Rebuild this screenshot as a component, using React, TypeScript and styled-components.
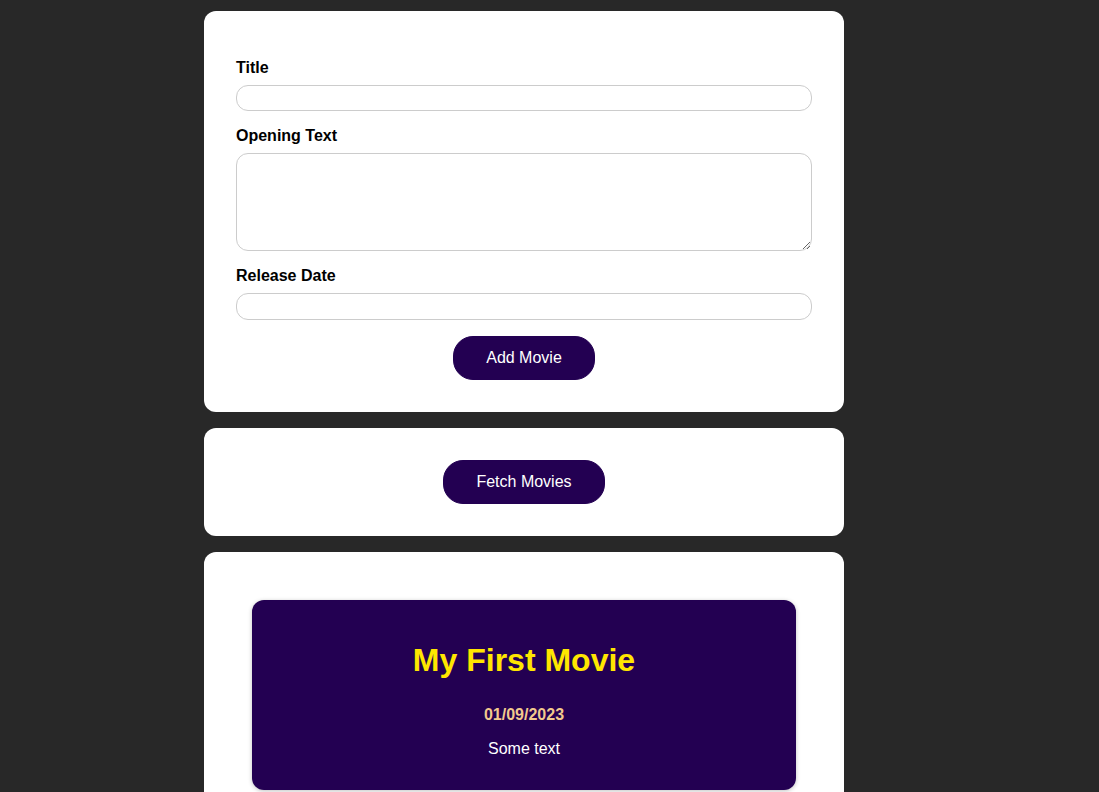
import React from "react";
import styled, { createGlobalStyle } from "styled-components";

const GlobalStyle = createGlobalStyle`
  * { box-sizing: border-box; }
  html, body {
    margin: 0;
    padding: 0;
    background: #282828;
    font-family: "Liberation Sans", Arial, sans-serif;
    font-size: 16px;
  }
`;

const Page = styled.main`
  width: 1048px;
  display: flex;
  flex-direction: column;
  align-items: center;
  gap: 16px;
  padding-top: 11px;
`;

const Section = styled.section`
  width: 640px;
  max-width: 90%;
  background: #ffffff;
  border-radius: 12px;
  padding: 32px;
  text-align: center;
`;

const Form = styled.form`
  padding-top: 16px;
  text-align: left;
  display: flex;
  flex-direction: column;
`;

const Control = styled.div`
  margin-bottom: 16px;
`;

const Label = styled.label`
  display: block;
  font-weight: bold;
  margin-bottom: 8px;
  color: #000;
`;

const Input = styled.input`
  display: block;
  width: 100%;
  font: inherit;
  padding: 3.2px;
  border-radius: 12px;
  border: 1px solid #ccc;
  background: #fff;
  outline: none;
`;

const TextArea = styled.textarea`
  display: block;
  width: 100%;
  font: inherit;
  padding: 3.2px;
  border-radius: 12px;
  border: 1px solid #ccc;
  height: 98px;
  background: #fff;
  outline: none;
`;

const Button = styled.button`
  font: inherit;
  cursor: pointer;
  background: #230052;
  border: 1px solid #230052;
  color: #ffffff;
  padding: 12px 32px;
  border-radius: 20px;
  align-self: center;
`;

const MovieList = styled.ul`
  list-style: none;
  margin: 0;
  padding: 0;
`;

const Movie = styled.li`
  margin: 16px;
  padding: 16px;
  text-align: center;
  background: #230052;
  color: #ffffff;
  border-radius: 12px;
  box-shadow: 0 1px 4px rgba(0, 0, 0, 0.25);
`;

const MovieTitle = styled.h2`
  font-size: 32px;
  margin: 26.5px 0;
  color: #ffe600;
`;

const MovieDate = styled.h3`
  font-size: 16px;
  margin: 16px 0;
  color: #f2c98d;
`;

const MovieText = styled.p`
  margin: 16px 0;
`;

export default function App() {
  return (
    <>
      <GlobalStyle />
      <Page>
        <Section>
          <Form onSubmit={(e) => e.preventDefault()}>
            <Control>
              <Label htmlFor="title">Title</Label>
              <Input id="title" type="text" />
            </Control>
            <Control>
              <Label htmlFor="opening-text">Opening Text</Label>
              <TextArea id="opening-text" rows={5} />
            </Control>
            <Control>
              <Label htmlFor="date">Release Date</Label>
              <Input id="date" type="text" />
            </Control>
            <Button type="submit">Add Movie</Button>
          </Form>
        </Section>
        <Section>
          <Button>Fetch Movies</Button>
        </Section>
        <Section>
          <MovieList>
            <Movie>
              <MovieTitle>My First Movie</MovieTitle>
              <MovieDate>01/09/2023</MovieDate>
              <MovieText>Some text</MovieText>
            </Movie>
          </MovieList>
        </Section>
      </Page>
    </>
  );
}
